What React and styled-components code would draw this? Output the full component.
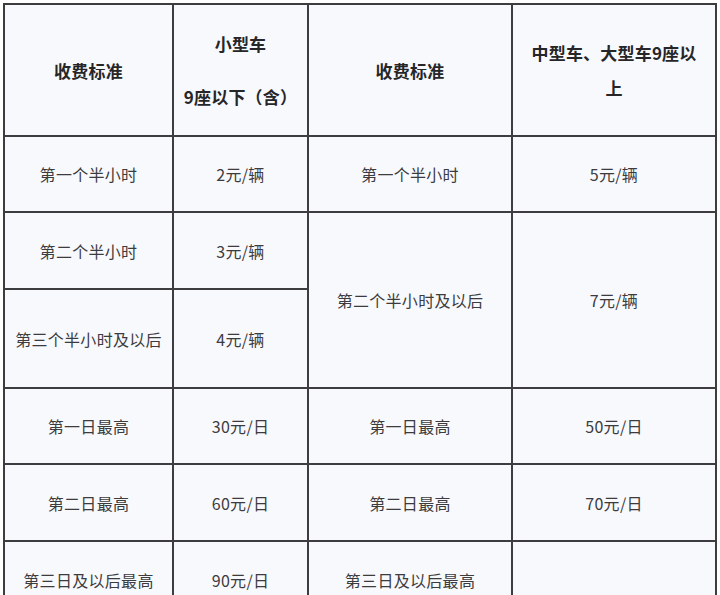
import React from "react";
import styled, { createGlobalStyle } from "styled-components";

const Global = createGlobalStyle`
  html, body { margin: 0; padding: 0; background: #ffffff; }
  body { font-family: "Noto Sans CJK SC", "Noto Sans", sans-serif; }
`;

const Page = styled.div`
  padding: 3px 0 0 3px;
`;

const Table = styled.table`
  border-collapse: collapse;
  table-layout: fixed;
  width: 712px;
  background: #f8f9fd;
`;

const Row = styled.tr`
  height: ${(p) => p.$h}px;
`;

const Cell = styled.td`
  border: 2px solid #3d3d3f;
  padding: 0 6px;
  text-align: center;
  vertical-align: middle;
  font-size: 16px;
  line-height: 24px;
  letter-spacing: 0.3px;
  color: #3c3c3e;
  font-weight: 400;
`;

const HeadCell = styled(Cell)`
  font-size: 17px;
  font-weight: 700;
  letter-spacing: 0.2px;
  color: #262628;
  line-height: 35px;
`;

const HeadLine = styled.div`
  line-height: 26px;
  & + & {
    margin-top: 27px;
  }
`;

const data = [
  { h: 76, cells: ["第一个半小时", "2元/辆", "第一个半小时", "5元/辆"] },
  {
    h: 77,
    cells: ["第二个半小时", "3元/辆", { t: "第二个半小时及以后", rs: 2 }, { t: "7元/辆", rs: 2 }],
  },
  { h: 99, cells: ["第三个半小时及以后", "4元/辆"] },
  { h: 76, cells: ["第一日最高", "30元/日", "第一日最高", "50元/日"] },
  { h: 77, cells: ["第二日最高", "60元/日", "第二日最高", "70元/日"] },
  { h: 77, cells: ["第三日及以后最高", "90元/日", "第三日及以后最高", ""] },
];

export default function App() {
  return (
    <Page>
      <Global />
      <Table>
        <colgroup>
          <col style={{ width: 169 }} />
          <col style={{ width: 135 }} />
          <col style={{ width: 204 }} />
          <col style={{ width: 204 }} />
        </colgroup>
        <tbody>
          <Row $h={132}>
            <HeadCell>收费标准</HeadCell>
            <HeadCell>
              <HeadLine>小型车</HeadLine>
              <HeadLine>9座以下（含）</HeadLine>
            </HeadCell>
            <HeadCell>收费标准</HeadCell>
            <HeadCell>
              中型车、大型车9座以
              <br />上
            </HeadCell>
          </Row>
          {data.map((r, i) => (
            <Row key={i} $h={r.h}>
              {r.cells.map((c, j) =>
                typeof c === "string" ? (
                  <Cell key={j}>{c}</Cell>
                ) : (
                  <Cell key={j} rowSpan={c.rs}>
                    {c.t}
                  </Cell>
                )
              )}
            </Row>
          ))}
        </tbody>
      </Table>
    </Page>
  );
}
